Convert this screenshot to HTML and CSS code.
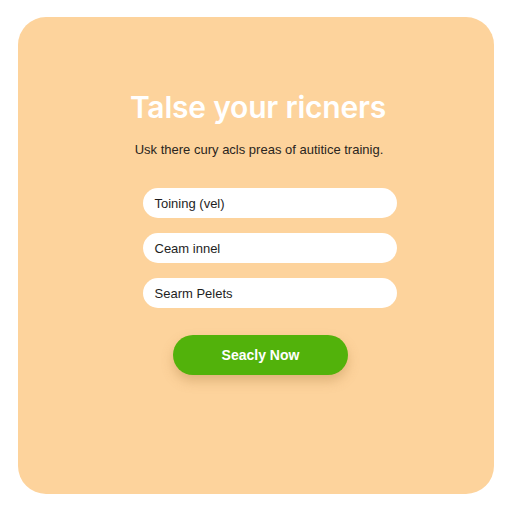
FILE: index.html
```html
<!DOCTYPE html>
<html>
<head>
<meta charset="utf-8">
<link rel="stylesheet" href="styles.css">
</head>
<body>
<div class="card">
  <h1 class="title">Talse your ricners</h1>
  <p class="sub">Usk there cury acls preas of autitice trainig.</p>
  <div class="fields">
    <div class="field">Toining (vel)</div>
    <div class="field">Ceam innel</div>
    <div class="field">Searm Pelets</div>
  </div>
  <button class="btn">Seacly Now</button>
</div>
</body>
</html>
```
FILE: styles.css
```css
html, body {
  margin: 0;
  padding: 0;
  background: #ffffff;
  width: 512px;
  height: 512px;
  overflow: hidden;
}
body {
  padding: 17px 18px 18px 18px;
  box-sizing: border-box;
  font-family: "Open Sans", "Liberation Sans", sans-serif;
}
.card {
  width: 476px;
  height: 477px;
  background: #fdd39c;
  border-radius: 28px;
  display: flex;
  flex-direction: column;
  align-items: center;
  box-sizing: border-box;
  padding-top: 72px;
}
.title {
  margin: 0 0 0 4px;
  font-family: "Inter", "Open Sans", sans-serif;
  font-size: 30px;
  font-weight: 600;
  color: #ffffff;
  line-height: 36px;
  letter-spacing: -0.2px;
}
.sub {
  margin: 16px 0 0 6px;
  font-family: "Liberation Sans", Arial, sans-serif;
  font-size: 13px;
  line-height: 18px;
  color: #2a2520;
}
.fields {
  margin-top: 29px;
  display: flex;
  flex-direction: column;
  gap: 15px;
  margin-left: 27px;
}
.field {
  width: 254px;
  height: 30px;
  box-sizing: border-box;
  background: #ffffff;
  border-radius: 15px;
  padding-left: 12px;
  display: flex;
  align-items: center;
  font-family: "Liberation Sans", Arial, sans-serif;
  font-size: 13px;
  color: #1e1e1e;
}
.btn {
  margin-top: 27px;
  width: 175px;
  height: 40px;
  border: none;
  border-radius: 20px;
  background: #52b20b;
  color: #ffffff;
  font-family: "Liberation Sans", Arial, sans-serif;
  font-weight: 700;
  font-size: 14px;
  box-shadow: 0 6px 12px rgba(170, 120, 60, 0.35);
  margin-left: 9px;
}
```
